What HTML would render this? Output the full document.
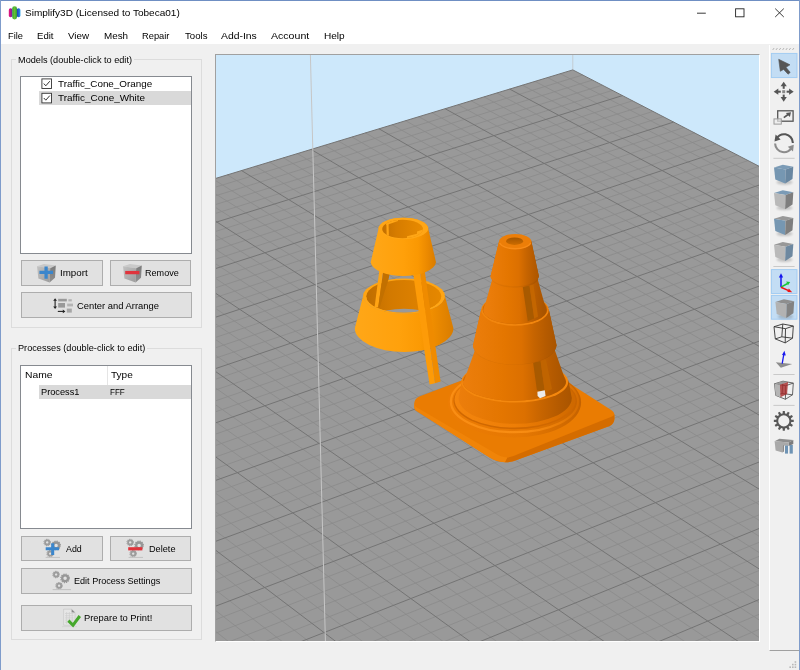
<!DOCTYPE html>
<html><head><meta charset="utf-8"><title>Simplify3D</title>
<style>
html,body{margin:0;padding:0;}
body{width:800px;height:670px;overflow:hidden;background:#f0f0f0;font-family:"Liberation Sans",sans-serif;position:relative;color:#000;}
.abs{position:absolute;}
.t{position:absolute;white-space:nowrap;transform-origin:0 0;line-height:1;}
.seg{font-size:9.8px;}
.tah{font-size:9.1px;}
.btn{position:absolute;background:#e1e1e1;border:1px solid #adadad;box-sizing:border-box;}
.gb{position:absolute;border:1px solid #dcdcdc;box-sizing:border-box;}
.lb{position:absolute;background:#fff;border:1px solid #868a90;box-sizing:border-box;}
.sep{position:absolute;left:773px;width:22px;height:1px;background:#c8c8c8;}
.sel{position:absolute;left:771px;width:26px;background:#c3ddf4;border:1px solid #a3cdf3;box-sizing:border-box;}
</style></head><body>
<!-- window frame -->
<div class="abs" style="left:0;top:0;width:800px;height:44px;background:#fff;"></div>
<div class="abs" style="left:0;top:0;width:800px;height:1px;background:#6f8fc3;"></div>
<div class="abs" style="left:0;top:0;width:1px;height:670px;background:#7f9ccb;"></div>
<div class="abs" style="left:799px;top:0;width:1px;height:670px;background:#7f9ccb;"></div>
<!-- title icon -->
<svg class="abs" style="left:7px;top:4px" width="16" height="18" viewBox="0 0 16 18">
<defs>
<linearGradient id="gm" x1="0" x2="1" y1="0" y2="0"><stop offset="0" stop-color="#f0147a"/><stop offset="1" stop-color="#6a1fa0"/></linearGradient>
<linearGradient id="gg" x1="0" x2="1" y1="0" y2="0"><stop offset="0" stop-color="#2fa53a"/><stop offset="0.5" stop-color="#6bbf2e"/><stop offset="1" stop-color="#2a9c3c"/></linearGradient>
<linearGradient id="gbl" x1="0" x2="1" y1="0" y2="0"><stop offset="0" stop-color="#2338b0"/><stop offset="1" stop-color="#1f9be8"/></linearGradient>
</defs>
<rect x="1.8" y="4.2" width="3.6" height="9" rx="1.7" fill="url(#gm)"/>
<rect x="9.8" y="4.2" width="3.6" height="9" rx="1.7" fill="url(#gbl)"/>
<rect x="5.2" y="2.2" width="4.8" height="13.2" rx="2.3" fill="url(#gg)"/>
</svg>
<div class="t seg" style="transform:scaleX(1.0234);left:25.2px;top:7.9px;">Simplify3D (Licensed to Tobeca01)</div>
<!-- window controls -->
<svg class="abs" style="left:690px;top:0" width="110" height="30" viewBox="0 0 110 30">
<path d="M7,13.2H15.8" stroke="#222" stroke-width="0.9" fill="none"/>
<rect x="45.6" y="8.8" width="8.4" height="8" stroke="#222" stroke-width="0.9" fill="none"/>
<path d="M85.2,8.6L93.8,17M93.8,8.6L85.2,17" stroke="#222" stroke-width="0.9" fill="none"/>
</svg>
<!-- menu -->
<div class="t seg m" style="transform:scaleX(0.9432);left:8.3px;top:31px;">File</div>
<div class="t seg m" style="transform:scaleX(0.9769);left:37.1px;top:31px;">Edit</div>
<div class="t seg m" style="transform:scaleX(1.0018);left:68.2px;top:31px;">View</div>
<div class="t seg m" style="transform:scaleX(1.0055);left:103.5px;top:31px;">Mesh</div>
<div class="t seg m" style="transform:scaleX(0.9489);left:141.8px;top:31px;">Repair</div>
<div class="t seg m" style="transform:scaleX(0.9836);left:184.6px;top:31px;">Tools</div>
<div class="t seg m" style="transform:scaleX(1.0602);left:221.3px;top:31px;">Add-Ins</div>
<div class="t seg m" style="transform:scaleX(1.0789);left:271.3px;top:31px;">Account</div>
<div class="t seg m" style="transform:scaleX(1.0270);left:323.7px;top:31px;">Help</div>
<!-- Models group -->
<div class="gb" style="left:10.5px;top:59.2px;width:191.5px;height:269.2px;"></div>
<div class="abs" style="left:15.5px;top:55px;width:118px;height:10px;background:#f0f0f0;"></div>
<div class="t tah" style="transform:scaleX(1.0069);left:17.6px;top:55.6px;">Models (double-click to edit)</div>
<div class="lb" style="left:20.3px;top:75.5px;width:171.7px;height:178px;"></div>
<div class="abs" style="left:38.7px;top:91.2px;width:152.5px;height:13.6px;background:#d9d9d9;"></div>
<svg class="abs" style="left:40.6px;top:78px" width="12" height="26" viewBox="0 0 12 26">
<rect x="0.9" y="0.9" width="9.6" height="9.6" fill="#fff" stroke="#333" stroke-width="0.9"/>
<path d="M2.8,5.6L4.8,7.8L8.8,3.2" stroke="#333" stroke-width="1" fill="none"/>
<rect x="0.9" y="15.3" width="9.6" height="9.6" fill="#fff" stroke="#333" stroke-width="0.9"/>
<path d="M2.8,20L4.8,22.2L8.8,17.6" stroke="#333" stroke-width="1" fill="none"/>
</svg>
<div class="t seg" style="transform:scaleX(1.0056);left:57.6px;top:78.9px;">Traffic_Cone_Orange</div>
<div class="t seg" style="transform:scaleX(1.0111);left:57.6px;top:93.3px;">Traffic_Cone_White</div>
<!-- buttons -->
<div class="btn" style="left:21px;top:260.3px;width:82px;height:25.4px;"></div>
<div class="btn" style="left:109.7px;top:260.3px;width:81.8px;height:25.4px;"></div>
<div class="btn" style="left:21px;top:292.3px;width:170.5px;height:25.4px;"></div>
<!-- import icon -->
<svg class="abs" style="left:36px;top:263px" width="22" height="21" viewBox="0 0 22 21">
<defs>
<linearGradient id="cf" x1="0" x2="1" y1="0" y2="1"><stop offset="0" stop-color="#c2c2c2"/><stop offset="1" stop-color="#9c9c9c"/></linearGradient>
<linearGradient id="cr" x1="0" x2="0" y1="0" y2="1"><stop offset="0" stop-color="#7a7a7a"/><stop offset="1" stop-color="#909090"/></linearGradient>
</defs>
<polygon points="1,3.2 8,1 19.8,2.6 14.2,5.2" fill="#c9c9c9"/>
<polygon points="1,3.2 14.2,5.2 13.6,19.4 2.4,15.6" fill="url(#cf)"/>
<polygon points="14.2,5.2 19.8,2.6 19,14.8 13.6,19.4" fill="url(#cr)"/>
<path d="M3.4,9.4H17M10.1,3.4V15.8" stroke="#3b86cc" stroke-width="3.3" fill="none"/>
</svg>
<div class="t tah" style="transform:scaleX(1.0764);left:59.8px;top:269.2px;">Import</div>
<!-- remove icon -->
<svg class="abs" style="left:122.2px;top:263px" width="22" height="21" viewBox="0 0 22 21">
<polygon points="1,3.2 8,1 19.8,2.6 14.2,5.2" fill="#c9c9c9"/>
<polygon points="1,3.2 14.2,5.2 13.6,19.4 2.4,15.6" fill="url(#cf)"/>
<polygon points="14.2,5.2 19.8,2.6 19,14.8 13.6,19.4" fill="url(#cr)"/>
<path d="M3.2,9.6H17.4" stroke="#e0343c" stroke-width="3.3" fill="none"/>
</svg>
<div class="t tah" style="transform:scaleX(0.9963);left:145px;top:269.2px;">Remove</div>
<!-- center & arrange icon -->
<svg class="abs" style="left:52px;top:297px" width="23" height="17" viewBox="0 0 23 17">
<path d="M3.1,3V10.4" stroke="#222" stroke-width="1.1"/>
<path d="M3.1,1.2L1.2,3.8H5zM3.1,12L1.2,9.4H5z" fill="#222"/>
<path d="M5.8,14.4H11.5" stroke="#222" stroke-width="1.1"/>
<path d="M13.4,14.4L10.8,12.6V16.2z" fill="#222"/>
<rect x="6.2" y="1.8" width="8.6" height="2.6" fill="#9a9a9a"/>
<rect x="16.4" y="2.2" width="3.4" height="2.2" fill="#b4b4b4"/>
<rect x="6.2" y="6" width="6.8" height="4.6" fill="#9a9a9a"/>
<rect x="15.2" y="6.6" width="5.8" height="2.8" fill="#b4b4b4"/>
<rect x="14.8" y="11.6" width="5" height="4" fill="#a6a6a6"/>
</svg>
<div class="t tah" style="transform:scaleX(1.0331);left:76.8px;top:301.7px;">Center and Arrange</div>

<!-- Processes group -->
<div class="gb" style="left:10.5px;top:348px;width:191.5px;height:292px;"></div>
<div class="abs" style="left:15.5px;top:343.5px;width:131px;height:10px;background:#f0f0f0;"></div>
<div class="t tah" style="transform:scaleX(1.0070);left:17.6px;top:344.4px;">Processes (double-click to edit)</div>
<div class="lb" style="left:20.3px;top:365px;width:171.7px;height:164px;"></div>
<div class="abs" style="left:106.6px;top:366px;width:1px;height:19px;background:#e5e5e5;"></div>
<div class="abs" style="left:38.5px;top:385.2px;width:152.7px;height:14px;background:#d9d9d9;"></div>
<div class="t seg" style="transform:scaleX(1.0520);left:25px;top:369.9px;">Name</div>
<div class="t seg" style="transform:scaleX(1.0259);left:111.2px;top:369.9px;">Type</div>
<div class="t seg" style="transform:scaleX(0.9426);left:41.3px;top:387.4px;">Process1</div>
<div class="t seg" style="transform:scaleX(0.8244);left:109.8px;top:387.4px;">FFF</div>
<div class="btn" style="left:21px;top:535.5px;width:82px;height:25.6px;"></div>
<div class="btn" style="left:109.7px;top:535.5px;width:81.8px;height:25.6px;"></div>
<div class="btn" style="left:21px;top:568px;width:170.5px;height:25.6px;"></div>
<div class="btn" style="left:21px;top:605.2px;width:170.5px;height:25.6px;"></div>
<!-- gear defs -->
<svg width="0" height="0" style="position:absolute"><defs>
<g id="gear"><circle r="2.9" fill="none" stroke="#979797" stroke-width="2.3"/><circle r="4.3" fill="none" stroke="#979797" stroke-width="1.2" stroke-dasharray="1.15 1.1"/></g>
<g id="gearS"><circle r="2.1" fill="none" stroke="#9c9c9c" stroke-width="1.8"/><circle r="3.2" fill="none" stroke="#9c9c9c" stroke-width="1.1" stroke-dasharray="0.95 0.725"/></g>
</defs></svg>
<!-- add icon -->
<svg class="abs" style="left:42px;top:537px" width="20" height="22" viewBox="0 0 20 22">
<use href="#gearS" x="5.2" y="5.4"/><use href="#gear" x="14.1" y="8.4"/><use href="#gearS" x="8.2" y="16.6"/>
<path d="M3.6,20.4H18" stroke="#c2c2c2" stroke-width="1"/>
<path d="M3.7,11.7H17.1M10.7,6.2V18.1" stroke="#3b86cc" stroke-width="3" fill="none"/>
</svg>
<div class="t tah" style="transform:scaleX(0.9730);left:66px;top:544.5px;">Add</div>
<!-- delete icon -->
<svg class="abs" style="left:125.4px;top:537px" width="20" height="22" viewBox="0 0 20 22">
<use href="#gearS" x="5.2" y="5.4"/><use href="#gear" x="14.1" y="8.4"/><use href="#gearS" x="8.2" y="16.6"/>
<path d="M3.6,20.4H18" stroke="#c2c2c2" stroke-width="1"/>
<path d="M3.2,11.8H17.4" stroke="#e0343c" stroke-width="3.2" fill="none"/>
</svg>
<div class="t tah" style="transform:scaleX(1.0077);left:148.5px;top:544.5px;">Delete</div>
<!-- edit icon -->
<svg class="abs" style="left:51px;top:569px" width="22" height="23" viewBox="0 0 22 23">
<use href="#gearS" x="5.1" y="5.5"/><use href="#gear" x="14.1" y="9.3"/><use href="#gearS" x="8.1" y="16.7"/>
<path d="M1.6,20.6H20" stroke="#c2c2c2" stroke-width="1"/>
</svg>
<div class="t tah" style="transform:scaleX(0.9978);left:74.3px;top:577px;">Edit Process Settings</div>
<!-- prepare icon -->
<svg class="abs" style="left:60.5px;top:607px" width="22" height="22" viewBox="0 0 22 22">
<path d="M2.6,2.2H10.6L14,5.4V18.2H2.6z" fill="#e6e6e6" stroke="#c4c4c4" stroke-width="0.6"/>
<path d="M10.6,2.2V5.4H14z" fill="#8a8a8a"/>
<path d="M4,6.5H12.6M4,8.7H12.6M4,10.9H12.6M4,13.1H12.6M4,15.3H12.6M5.6,5V17M8.4,5V17M11.2,5V17" stroke="#cfcfcf" stroke-width="0.7"/>
<path d="M1.2,19.6H16" stroke="#d0d0d0" stroke-width="0.8"/>
<path d="M7.4,13.6L12,18.2L18.8,9" stroke="#46a82c" stroke-width="3" fill="none" stroke-linejoin="miter"/>
</svg>
<div class="t tah" style="transform:scaleX(1.0307);left:83.5px;top:613.8px;">Prepare to Print!</div>

<!-- viewport -->
<div class="abs" style="left:215px;top:54px;width:545px;height:588px;box-sizing:border-box;border:1px solid;border-color:#a0a0a0 #fff #fff #a0a0a0;"></div>
<svg class="abs" style="left:216px;top:55px;" width="543" height="586" viewBox="0 0 543 586">
<defs><linearGradient id="sky" x1="0" x2="0" y1="0" y2="1"><stop offset="0" stop-color="#cbe7fb"/><stop offset="1" stop-color="#d3ebfc"/></linearGradient></defs>
<rect x="0" y="0" width="543" height="586" fill="#cde8fb"/>
<path d="M356.8,0L356.8,14.9" stroke="#c4ccd2" stroke-width="1"/>
<polygon points="356.8,14.9 1232.6,468.1 48.4,1021.6 -688.6,332.6" fill="#999999"/>
<path d="M344.3,18.7L1219.3,474.3M366.6,20.0L-680.8,339.9M331.7,22.6L1205.8,480.6M376.4,25.1L-673.0,347.2M319.1,26.4L1192.3,487.0M386.3,30.2L-665.1,354.6M306.5,30.2L1178.7,493.3M396.3,35.4L-657.1,362.0M280.9,38.0L1151.2,506.2M416.5,45.8L-641.0,377.1M268.1,41.9L1137.3,512.6M426.6,51.1L-632.9,384.7M255.2,45.8L1123.3,519.2M436.9,56.4L-624.6,392.4M242.2,49.8L1109.3,525.7M447.2,61.7L-616.4,400.1M216.0,57.7L1080.9,539.0M468.0,72.5L-599.6,415.7M202.9,61.7L1066.6,545.7M478.5,77.9L-591.2,423.7M189.6,65.7L1052.2,552.4M489.0,83.4L-582.6,431.6M176.3,69.8L1037.7,559.2M499.7,88.9L-574.0,439.7M149.5,77.9L1008.5,572.8M521.2,100.0L-556.6,456.0M136.0,82.0L993.7,579.7M532.0,105.6L-547.8,464.2M122.5,86.1L978.9,586.7M543.0,111.3L-538.9,472.5M108.8,90.3L963.9,593.7M554.0,117.0L-530.0,480.9M81.4,98.6L933.7,607.8M576.2,128.5L-511.8,497.8M67.5,102.8L918.4,614.9M587.4,134.3L-502.6,506.4M53.6,107.1L903.1,622.1M598.7,140.1L-493.4,515.1M39.7,111.3L887.6,629.3M610.1,146.0L-484.1,523.8M11.5,119.9L856.4,643.9M633.1,157.9L-465.2,541.4M-2.7,124.2L840.7,651.3M644.7,163.9L-455.6,550.4M-16.9,128.5L824.8,658.7M656.4,169.9L-446.0,559.4M-31.3,132.9L808.8,666.2M668.1,176.0L-436.2,568.5M-60.1,141.6L776.6,681.2M691.9,188.3L-416.5,586.9M-74.7,146.0L760.3,688.8M704.0,194.6L-406.5,596.3M-89.3,150.5L743.9,696.5M716.1,200.8L-396.5,605.7M-104.0,155.0L727.4,704.2M728.3,207.1L-386.3,615.2M-133.6,164.0L694.0,719.8M752.9,219.9L-365.8,634.4M-148.6,168.5L677.2,727.7M765.3,226.3L-355.3,644.1M-163.6,173.1L660.2,735.6M777.9,232.8L-344.8,654.0M-178.6,177.6L643.1,743.6M790.5,239.3L-334.2,663.9M-209.0,186.9L608.6,759.7M816.1,252.6L-312.7,684.0M-224.4,191.5L591.2,767.9M829.0,259.2L-301.8,694.1M-239.8,196.2L573.6,776.1M842.0,266.0L-290.8,704.4M-255.3,200.9L555.9,784.4M855.1,272.7L-279.8,714.8M-286.5,210.4L520.2,801.1M881.5,286.4L-257.3,735.8M-302.2,215.2L502.1,809.5M894.9,293.4L-245.9,746.5M-318.0,220.0L483.9,818.0M908.4,300.3L-234.4,757.2M-333.9,224.8L465.6,826.6M922.0,307.4L-222.8,768.1M-366.0,234.6L428.6,843.9M949.5,321.6L-199.2,790.1M-382.1,239.5L409.9,852.6M963.4,328.8L-187.3,801.2M-398.4,244.4L391.0,861.4M977.4,336.0L-175.3,812.5M-414.7,249.4L372.0,870.3M991.5,343.3L-163.1,823.8M-447.6,259.4L333.6,888.2M1020.0,358.1L-138.4,846.9M-464.2,264.4L314.2,897.3M1034.4,365.5L-125.9,858.6M-480.9,269.5L294.7,906.4M1049.0,373.1L-113.3,870.4M-497.7,274.6L275.0,915.7M1063.6,380.7L-100.5,882.3M-531.5,284.9L235.2,934.3M1093.3,396.0L-74.6,906.5M-548.6,290.1L215.0,943.7M1108.3,403.8L-61.5,918.8M-565.8,295.3L194.8,953.2M1123.4,411.6L-48.2,931.2M-583.0,300.5L174.3,962.7M1138.6,419.5L-34.8,943.7M-617.8,311.1L133.0,982.0M1169.5,435.4L-7.7,969.2M-635.4,316.4L112.1,991.8M1185.1,443.5L6.1,982.1M-653.0,321.8L91.0,1001.6M1200.8,451.6L20.1,995.1M-670.7,327.2L69.8,1011.6M1216.6,459.8L34.2,1008.3" stroke="#8a8a8a" stroke-width="0.8" fill="none"/>
<path d="M356.8,14.9L1232.6,468.1M356.8,14.9L-688.6,332.6M293.7,34.1L1165.0,499.7M406.4,40.6L-649.1,369.5M229.1,53.7L1095.2,532.3M457.5,67.1L-608.0,407.9M163.0,73.8L1023.2,566.0M510.4,94.4L-565.4,447.8M95.1,94.4L948.8,600.7M565.0,122.7L-520.9,489.3M25.6,115.6L872.1,636.6M621.5,151.9L-474.7,532.6M-45.7,137.2L792.8,673.7M680.0,182.2L-426.4,577.7M-118.8,159.4L710.8,712.0M740.5,213.5L-376.1,624.7M-193.8,182.2L625.9,751.6M803.2,245.9L-323.5,673.9M-270.8,205.6L538.1,792.7M868.2,279.6L-268.6,725.2M-349.9,229.7L447.2,835.2M935.7,314.5L-211.1,779.0M-431.1,254.4L352.9,879.2M1005.7,350.7L-150.8,835.3M-514.6,279.7L255.2,924.9M1078.4,388.3L-87.6,894.4M-600.4,305.8L153.7,972.3M1154.0,427.4L-21.3,956.4M-688.6,332.6L48.4,1021.6M1232.6,468.1L48.4,1021.6" stroke="#747474" stroke-width="1" fill="none"/>
<path d="M94.4,0L109.4,586" stroke="#c6c6c6" stroke-width="1" fill="none"/>
<g transform="translate(-216,-55)">
<defs>
<linearGradient id="L1" gradientUnits="userSpaceOnUse" x1="354" x2="454" y1="0" y2="0">
 <stop offset="0" stop-color="#ffa718"/><stop offset="0.45" stop-color="#ffa10c"/><stop offset="0.66" stop-color="#fb9a04"/><stop offset="0.8" stop-color="#ee8c00"/><stop offset="1" stop-color="#d87c00"/></linearGradient>
<linearGradient id="L1in" gradientUnits="userSpaceOnUse" x1="366" x2="442" y1="0" y2="0">
 <stop offset="0" stop-color="#bf6d00"/><stop offset="0.3" stop-color="#d27900"/><stop offset="0.65" stop-color="#dc8000"/><stop offset="1" stop-color="#e68800"/></linearGradient>
<linearGradient id="L2" gradientUnits="userSpaceOnUse" x1="370" x2="437" y1="0" y2="0">
 <stop offset="0" stop-color="#ffa718"/><stop offset="0.5" stop-color="#ffa00a"/><stop offset="0.72" stop-color="#fa9802"/><stop offset="0.85" stop-color="#ec8a00"/><stop offset="1" stop-color="#d67a00"/></linearGradient>
<linearGradient id="L2in" gradientUnits="userSpaceOnUse" x1="382" x2="423" y1="0" y2="0">
 <stop offset="0" stop-color="#c26f00"/><stop offset="0.35" stop-color="#d67c00"/><stop offset="0.7" stop-color="#e08400"/><stop offset="1" stop-color="#e98b00"/></linearGradient>
<linearGradient id="Rbase" gradientUnits="userSpaceOnUse" x1="0" x2="1" y1="0" y2="0">
 <stop offset="0" stop-color="#ec7e0c"/><stop offset="0.38" stop-color="#e47600"/><stop offset="0.58" stop-color="#dc7000"/><stop offset="0.73" stop-color="#c66400"/><stop offset="0.88" stop-color="#b45a00"/><stop offset="1" stop-color="#a85400"/></linearGradient>
<linearGradient id="R1" href="#Rbase" x1="488" x2="541"/>
<linearGradient id="R2" href="#Rbase" x1="486" x2="544"/>
<linearGradient id="R3" href="#Rbase" x1="472" x2="557"/>
<linearGradient id="R4" href="#Rbase" x1="464" x2="565"/>
<linearGradient id="R5" href="#Rbase" x1="458" x2="573"/>
<linearGradient id="R6" gradientUnits="userSpaceOnUse" x1="449" x2="581" y1="0" y2="0">
 <stop offset="0" stop-color="#f4860e"/><stop offset="0.5" stop-color="#ee7e06"/><stop offset="0.8" stop-color="#dc7000"/><stop offset="1" stop-color="#c86600"/></linearGradient>
<linearGradient id="Rhole" x1="0" x2="0" y1="0" y2="1"><stop offset="0" stop-color="#a45600"/><stop offset="1" stop-color="#cc6c00"/></linearGradient>
<clipPath id="cpL1in"><ellipse cx="403.8" cy="296.4" rx="37.6" ry="16.3"/></clipPath>
<clipPath id="cpL2in"><ellipse cx="402.6" cy="229" rx="20.4" ry="9.2"/></clipPath>
</defs>

<!-- ================= LEFT CONE ================= -->
<!-- lower ring: back -->
<ellipse cx="404" cy="296" rx="40.9" ry="17.5" fill="#ffa514"/>
<ellipse cx="403.8" cy="296.4" rx="37.6" ry="16.3" fill="url(#L1in)"/>
<g clip-path="url(#cpL1in)">
  <ellipse cx="404.1" cy="330" rx="45.5" ry="21.2" fill="#999999"/>
</g>
<!-- left pillar -->
<polygon points="379.4,270 383.4,270 378.2,307.6 374.6,307" fill="#ffa414"/>
<polygon points="383.4,270 390.4,270 388.6,279 379.6,307.8 378.2,307.6" fill="#c27000"/>
<!-- lower ring: front body -->
<path d="M363.1,296 L354.8,328.3 A49.3,23.7 0 0 0 453.4,328.3 L444.9,296 A40.9,17.5 0 0 1 363.1,296 Z" fill="url(#L1)"/>
<path d="M363.1,296 A40.9,17.5 0 0 0 444.9,296 L441.4,296.4 A37.6,16.3 0 0 1 366.2,296.4 Z" fill="#ffa616"/>
<!-- right pillar -->
<polygon points="412.6,270 419.8,270 431.6,358 435,383.2 429.6,384.6 424.4,351" fill="#fd9b08"/>
<polygon points="419.8,270 424.6,270 436.2,352 440.6,381.6 435,383.2 431.6,358" fill="#ef8b00"/>

<!-- upper ring -->
<path d="M378.6,228.5 L370.7,262.2 A32.7,14.6 0 0 0 436,262.2 L428.2,228.5 A24.8,10.7 0 0 0 378.6,228.5 Z" fill="url(#L2)"/>
<ellipse cx="403.4" cy="228.5" rx="24.8" ry="10.7" fill="#ffa616"/>
<ellipse cx="402.6" cy="229" rx="20.4" ry="9.2" fill="url(#L2in)"/>
<g clip-path="url(#cpL2in)">
  <polygon points="386.3,221 388.5,221 388.9,236 386.7,236" fill="#ffa414"/>
  <path d="M385,222.4 L398,218.4 L398,221 L386.6,225 Z" fill="#ffa616"/>
  <path d="M407,240 L407,236.2 L417,233.8 L417,231.4 L424,229.2 L424,240 Z" fill="#ffa616"/>
</g>

<!-- ================= RIGHT CONE ================= -->
<!-- base plate -->
<path d="M419.3,396.6 L526.8,356 L610.4,409.6 Q614.4,412 614.4,415 L614.4,419 Q614.2,423.6 609.6,426 L518,459.4 Q512,462.4 505,462.3 Q497,462 489.6,457.6 L416.6,411 Q414.4,409.6 414.3,407.4 L414.2,403.6 Q414.6,398.6 419.3,396.6 Z" fill="#ea7c02"/>
<path d="M414.2,403.2 L414.3,407.4 Q414.4,409.6 416.6,411 L489.6,457.6 Q497,462 505,462.3 L507.5,457.6 Q500.5,457 495.5,453.6 L417,407.6 Q414.4,405.8 414.2,403.2 Z" fill="#f08408"/>
<path d="M507.5,457.6 L505,462.3 Q512,462.4 518,459.4 L609.6,426 Q614.2,423.6 614.4,419 L614.4,414.4 Q613.8,415.6 611.4,416.8 L519,453.8 Q513,456.8 507.5,457.6 Z" fill="#d46c00"/>
<defs>
<linearGradient id="TOR" gradientUnits="userSpaceOnUse" x1="448" x2="581" y1="0" y2="0"><stop offset="0" stop-color="#ec7c04"/><stop offset="0.55" stop-color="#e67802"/><stop offset="0.85" stop-color="#d46c00"/><stop offset="1" stop-color="#c46200"/></linearGradient>
<linearGradient id="TORH" gradientUnits="userSpaceOnUse" x1="448" x2="581" y1="0" y2="0"><stop offset="0" stop-color="#fa8e14"/><stop offset="0.6" stop-color="#f88c12"/><stop offset="0.85" stop-color="#e87c06"/><stop offset="1" stop-color="#d26a00"/></linearGradient>
</defs>
<!-- torus ring -->
<ellipse cx="514.5" cy="402.5" rx="66.6" ry="35" fill="url(#TOR)"/>
<ellipse cx="514.5" cy="401.4" rx="63.6" ry="30.8" fill="none" stroke="url(#TORH)" stroke-width="2.2"/>
<ellipse cx="514.5" cy="400.6" rx="61" ry="28.6" fill="#d06800"/>
<!-- fillet -->
<ellipse cx="514.5" cy="399.6" rx="60" ry="28" fill="url(#R6)"/>
<!-- collar body -->
<path d="M461.6,382 L458.6,398 A56.6,25.9 0 0 0 571.8,398 L568.4,380.6 Z" fill="url(#R5)"/>
<ellipse cx="514.8" cy="382" rx="53.4" ry="20.6" fill="#f4880e"/>
<ellipse cx="514.4" cy="381.4" rx="51.6" ry="19.4" fill="#d26a00"/>
<!-- section 4 -->
<path d="M474.7,351 L464.2,380 L462.8,381.4 A51.6,19.4 0 0 0 566,381.4 L564.4,377.6 L554.8,350 Z" fill="url(#R4)"/>
<polygon points="533.1,362.5 540.6,361 545,393 536.9,390.3" fill="#a85a00"/>
<polygon points="540.6,361 546,359.6 552,389 545,393" fill="#c06400"/>
<polygon points="537.4,391.8 544.8,390.2 545.6,396 540,398.2 537.6,396" fill="#ececec"/>
<!-- ring 3 -->
<path d="M481.2,309.6 L472.9,346 L474.7,351.2 A41,18 0 0 0 554.8,350.2 L556.6,345.4 L548.8,309.6 Z" fill="url(#R3)"/>
<path d="M481.2,309.6 L472.9,346 L474.7,351.2 A41,18 0 0 0 554.8,350.2 L556.6,345.4 L548.8,309.6 Z" fill="#000" opacity="0.045"/>
<path d="M481.2,309.6 L472.9,346.1 A41.9,19.6 0 0 0 556.6,345.4 L548.8,309.6 Z" fill="url(#R3)"/>
<ellipse cx="515" cy="310" rx="33.8" ry="15.8" fill="#f2860e"/>
<ellipse cx="515" cy="309.4" rx="32.4" ry="14.8" fill="#d06a00"/>
<!-- section 2 -->
<path d="M492.3,279 L485.4,303.4 Q483.6,307 483.2,310.4 A31.8,13.6 0 0 0 546.8,310 Q546.2,306.6 544.2,302.8 L537.6,279 Z" fill="url(#R2)"/>
<polygon points="522.7,286.4 529.5,285.2 534.2,318.6 527.8,321.2" fill="#a85a00"/>
<polygon points="529.5,285.2 533.4,284.6 538,316.6 534.2,318.6" fill="#c46600"/>
<!-- section 1 -->
<path d="M499,241.6 L490.5,276.6 L492.3,280.8 A23.4,9.6 0 0 0 537.6,280.2 L538.9,276.2 L531.4,241.6 Z" fill="url(#R1)"/>
<path d="M499,241.6 L490.5,276.6 L492.3,280.8 A23.4,9.6 0 0 0 537.6,280.2 L538.9,276.2 L531.4,241.6 Z" fill="#000" opacity="0.045"/>
<path d="M499,241.6 L490.5,276.7 A24.3,10.8 0 0 0 538.9,276.2 L531.4,241.6 Z" fill="url(#R1)"/>
<ellipse cx="515.2" cy="241.5" rx="16.2" ry="7.5" fill="#ec7e08"/>
<path d="M499.6,243 A16,7.4 0 0 0 530.8,243" stroke="#f88c18" stroke-width="1.4" fill="none"/>
<ellipse cx="514.6" cy="241.2" rx="8.5" ry="3.7" fill="url(#Rhole)"/>

</g>
</svg>
<!-- right toolbar -->
<div class="abs" style="left:769px;top:45px;width:30px;height:606px;background:#f0f0f0;border-left:1px solid #fff;border-bottom:1px solid #a0a0a0;box-sizing:border-box;"></div>
<svg class="abs" style="left:769px;top:45px" width="30" height="430" viewBox="769 45 30 430">
<defs><filter id="sh" x="-20%" y="-20%" width="140%" height="150%"><feGaussianBlur stdDeviation="0.9"/></filter></defs>
<path d="M772.8,49.8l1.2,-1.6M776.1,49.8l1.2,-1.6M779.4,49.8l1.2,-1.6M782.7,49.8l1.2,-1.6M786.0,49.8l1.2,-1.6M789.3,49.8l1.2,-1.6M792.6,49.8l1.2,-1.6" stroke="#a8a8a8" stroke-width="1" fill="none"/>
<rect x="771.4" y="53.4" width="25.6" height="24.2" fill="#c3ddf4" stroke="#9ecbf3" stroke-width="0.9"/>
<rect x="771.4" y="269.6" width="25.6" height="23.9" fill="#c3ddf4" stroke="#9ecbf3" stroke-width="0.9"/>
<rect x="771.4" y="295.4" width="25.6" height="23.8" fill="#c3ddf4" stroke="#9ecbf3" stroke-width="0.9"/>
<path d="M773.4,158.3H794.6" stroke="#c9c9c9" stroke-width="1"/>
<path d="M773.4,266.5H794.6" stroke="#c9c9c9" stroke-width="1"/>
<path d="M773.4,374.5H794.6" stroke="#c9c9c9" stroke-width="1"/>
<path d="M773.4,405.4H794.6" stroke="#c9c9c9" stroke-width="1"/>
<polygon points="778.7,59.3 790,64.8 786,67.3 790.2,72.4 788.1,74.2 783.6,69.4 780.3,71.3" fill="#555" stroke="#555" stroke-width="0.6" stroke-linejoin="round"/>
<g fill="#555" stroke="none">
<rect x="782.2" y="90.2" width="3" height="3" fill="#8a8a8a"/>
<g transform="rotate(0 783.7 91.7)"><polygon points="793.7,91.7 789.1,88.6 789.1,94.8"/><rect x="786.6" y="90.7" width="3.2" height="2"/></g>
<g transform="rotate(90 783.7 91.7)"><polygon points="793.7,91.7 789.1,88.6 789.1,94.8"/><rect x="786.6" y="90.7" width="3.2" height="2"/></g>
<g transform="rotate(180 783.7 91.7)"><polygon points="793.7,91.7 789.1,88.6 789.1,94.8"/><rect x="786.6" y="90.7" width="3.2" height="2"/></g>
<g transform="rotate(270 783.7 91.7)"><polygon points="793.7,91.7 789.1,88.6 789.1,94.8"/><rect x="786.6" y="90.7" width="3.2" height="2"/></g>
</g>
<rect x="777.7" y="110.8" width="15.4" height="10.4" fill="none" stroke="#555" stroke-width="1.3"/><rect x="774" y="118.9" width="7.3" height="5.2" fill="#ececec" fill-opacity="0.7" stroke="#9a9a9a" stroke-width="1"/><path d="M783.8,117.6L788.4,114.2" stroke="#555" stroke-width="1.7"/><polygon points="791,112.2 785.8,113 789.9,117" fill="#555"/>
<path d="M792.9,142.9A8.9,8.9 0 0 0 775.7,139.9" stroke="#555" stroke-width="2.1" fill="none"/><polygon points="774.5,141.4 775.6,134.4 780.6,139.4" fill="#555"/><path d="M775.1,143.5A8.9,8.9 0 0 0 792.3,146.5" stroke="#8c8c8c" stroke-width="2.1" fill="none"/><polygon points="793.8,144.8 793,151.4 787.8,146.8" fill="#8c8c8c"/>
<ellipse cx="784.5" cy="182.3" rx="8" ry="2.4" fill="#000" opacity="0.18" filter="url(#sh)"/>
<polygon points="774.0,167.4 782.8,164.7 793.3,166.7 785.5,169.4" fill="#7b9bb6"/><polygon points="774.0,167.4 785.5,169.4 785.2,183.6 775.3,179.5" fill="#7697b2"/><polygon points="785.5,169.4 793.3,166.7 792.5,178.9 785.2,183.6" fill="#6987a1"/>
<ellipse cx="784.5" cy="207.9" rx="8" ry="2.4" fill="#000" opacity="0.18" filter="url(#sh)"/>
<polygon points="774.0,193.0 782.8,190.3 793.3,192.3 785.5,195.0" fill="#7b9bb6"/><polygon points="774.0,193.0 785.5,195.0 785.2,209.2 775.3,205.2" fill="#b9b9b9"/><polygon points="785.5,195.0 793.3,192.3 792.5,204.5 785.2,209.2" fill="#7e7e7e"/>
<ellipse cx="784.5" cy="233.7" rx="8" ry="2.4" fill="#000" opacity="0.18" filter="url(#sh)"/>
<polygon points="774.0,218.8 782.8,216.1 793.3,218.1 785.5,220.8" fill="#989898"/><polygon points="774.0,218.8 785.5,220.8 785.2,235.0 775.3,230.9" fill="#7697b2"/><polygon points="785.5,220.8 793.3,218.1 792.5,230.3 785.2,235.0" fill="#7e7e7e"/>
<ellipse cx="784.5" cy="259.6" rx="8" ry="2.4" fill="#000" opacity="0.18" filter="url(#sh)"/>
<polygon points="774.0,244.7 782.8,242.0 793.3,244.0 785.5,246.7" fill="#989898"/><polygon points="774.0,244.7 785.5,246.7 785.2,260.9 775.3,256.9" fill="#b9b9b9"/><polygon points="785.5,246.7 793.3,244.0 792.5,256.2 785.2,260.9" fill="#6d88a0"/>
<path d="M781,287.2V276.4" stroke="#1414ee" stroke-width="1.5"/><polygon points="781,273.2 778.9,277.4 783.1,277.4" fill="#1414ee"/>
<path d="M781,287.2L787.6,283.5" stroke="#18c838" stroke-width="1.5"/><polygon points="790.2,282 786.2,281.6 788,285.2" fill="#18c838"/>
<path d="M781,287.2L788.6,290.6" stroke="#ee1616" stroke-width="1.5"/><polygon points="792.2,292.2 788.8,288.6 787.4,292" fill="#ee1616"/>
<ellipse cx="785.5" cy="316.6" rx="8" ry="2.2" fill="#000" opacity="0.18" filter="url(#sh)"/>
<polygon points="775.4,301.9 783.9,299.2 794.2,301.2 786.6,303.9" fill="#8e8e8e"/><polygon points="775.4,301.9 786.6,303.9 786.3,318.0 776.7,314.0" fill="#b2b2b2"/><polygon points="786.6,303.9 794.2,301.2 793.4,313.3 786.3,318.0" fill="#828282"/>
<path d="M774.0,326.7 L782.8,324.0 L793.3,326.0 L785.5,328.7 Z M774.0,326.7 L775.3,338.9 L785.2,342.9 L792.5,338.2 M793.3,326.0 L792.5,338.2 L792.5,338.2 M785.5,328.7 L785.2,342.9 M782.8,324.0 L781.8,336.8 M781.8,336.8 L775.3,338.9" stroke="#333" stroke-width="0.9" fill="none" stroke-linejoin="round"/>
<path d="M781.8,336.8 L792.5,338.2" stroke="#333" stroke-width="0.9"/>
<polygon points="775.8,362.2 792.2,364 780.8,367.8" fill="#8c8c8c"/>
<path d="M782.2,363.6L783.8,354.4" stroke="#1818ee" stroke-width="1.3"/><polygon points="784.4,350.8 782,355 785.8,355.6" fill="#1818ee"/>
<path d="M774.5,383.8 L783.0,381.2 L793.3,383.1 L785.7,385.7 Z M774.5,383.8 L775.8,395.4 L785.4,399.3 L792.5,394.8 M793.3,383.1 L792.5,394.8 M785.7,385.7 L785.4,399.3 M783.0,381.2 L782.1,393.5 M782.1,393.5 L775.8,395.4 M782.1,393.5 L792.5,394.8" stroke="#444" stroke-width="0.8" fill="none"/>
<polygon points="774.5,383.8 779.9,384.7 780.4,397.3 775.8,395.4" fill="#b4b4b4"/>
<polygon points="774.5,383.8 783.0,381.2 788.0,382.1 779.9,384.7" fill="#9a9a9a"/>
<polygon points="779.9,384.7 788.0,382.1 787.1,394.1 780.4,397.3" fill="#a62c2c" opacity="0.82"/>
<path fill-rule="evenodd" fill="#585858" d="M791.31,419.71 L793.75,419.85 L793.75,421.95 L791.31,422.09 L790.90,423.62 L792.94,424.97 L791.89,426.78 L789.71,425.68 L788.58,426.81 L789.68,428.99 L787.87,430.04 L786.52,428.00 L784.99,428.41 L784.85,430.85 L782.75,430.85 L782.61,428.41 L781.08,428.00 L779.73,430.04 L777.92,428.99 L779.02,426.81 L777.89,425.68 L775.71,426.78 L774.66,424.97 L776.70,423.62 L776.29,422.09 L773.85,421.95 L773.85,419.85 L776.29,419.71 L776.70,418.18 L774.66,416.83 L775.71,415.02 L777.89,416.12 L779.02,414.99 L777.92,412.81 L779.73,411.76 L781.08,413.80 L782.61,413.39 L782.75,410.95 L784.85,410.95 L784.99,413.39 L786.52,413.80 L787.87,411.76 L789.68,412.81 L788.58,414.99 L789.71,416.12 L791.89,415.02 L792.94,416.83 L790.90,418.18 Z M778.20,420.90 a5.6,5.6 0 1 0 11.2,0 a5.6,5.6 0 1 0 -11.2,0 Z"/>
<polygon points="774.6,441.2 779.4,438.7 793.3,440 788.8,442.6" fill="#8e8e8e"/>
<polygon points="788.8,442.6 793.3,440 793.3,444 788.8,446" fill="#7c7c7c"/>
<polygon points="774.6,441.2 788.8,442.6 788.8,446 782.4,445.6 782.4,452.6 775.6,450.6" fill="#a9a9a9"/>
<polygon points="782.4,445.6 784,445 784,451.6 782.4,452.6" fill="#8a8a8a"/>
<rect x="785" y="445.6" width="3" height="8" fill="#6e93b4"/>
<rect x="789.6" y="445" width="3.2" height="8.6" fill="#6e93b4"/>
</svg>
<!-- size grip -->
<svg class="abs" style="left:786px;top:658px" width="12" height="12" viewBox="0 0 12 12" fill="#b8b8b8">
<rect x="8.6" y="3.2" width="1.6" height="1.6"/><rect x="6" y="5.8" width="1.6" height="1.6"/><rect x="8.6" y="5.8" width="1.6" height="1.6"/>
<rect x="3.4" y="8.4" width="1.6" height="1.6"/><rect x="6" y="8.4" width="1.6" height="1.6"/><rect x="8.6" y="8.4" width="1.6" height="1.6"/>
</svg>
</body></html>
